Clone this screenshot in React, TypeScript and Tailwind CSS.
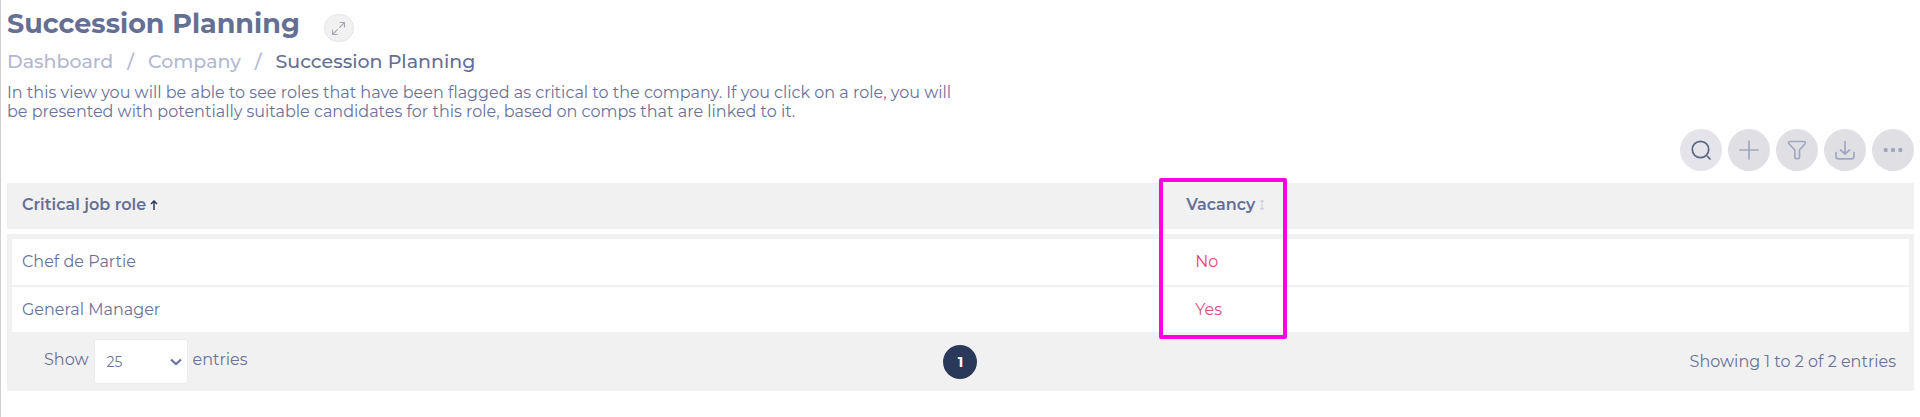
import type { ReactNode } from 'react';

const roles = [
  { name: 'Chef de Partie', vacancy: 'No', color: 'text-[#e9447a]' },
  { name: 'General Manager', vacancy: 'Yes', color: 'text-[#cc5685]' },
];

function Icon({ children, className = 'size-5' }: { children: ReactNode; className?: string }) {
  return (
    <svg
      viewBox="0 0 20 20"
      className={className}
      fill="none"
      stroke="currentColor"
      strokeWidth="1.7"
      strokeLinecap="round"
      strokeLinejoin="round"
      aria-hidden="true"
    >
      {children}
    </svg>
  );
}

function ToolButton({ label, active, children }: { label: string; active?: boolean; children: ReactNode }) {
  return (
    <button
      type="button"
      aria-label={label}
      className={`flex size-[42px] items-center justify-center rounded-full ${
        active ? 'bg-[#e4e4ea] text-[#5c6480]' : 'bg-[#e0e0e4] text-[#a0a7c0]'
      }`}
    >
      {children}
    </button>
  );
}

export default function App() {
  return (
    <main className="min-h-screen border-l border-[#cfcfcf] bg-white px-[6px] pt-[6px] pb-6 font-['Montserrat','Inter',sans-serif] text-[#69729a]">
      <header>
        <div className="flex items-center gap-6">
          <h1 className="text-[27px] leading-8 font-bold text-[#656f94]">Succession Planning</h1>
          <button
            type="button"
            aria-label="Expand"
            className="mt-2 flex h-7 w-[30px] items-center justify-center rounded-full border border-[#e6e6ea] bg-[#f1f1f1] text-[#a3a8b4]"
          >
            <Icon className="size-[15px]">
              <path d="M2 18L8.5 11.5M11.5 8.5L18 2M12 2H18V8M2 12V18H8" strokeWidth="1.5" />
            </Icon>
          </button>
        </div>
        <nav aria-label="Breadcrumb" className="mt-2 flex gap-[14px] text-[19px] leading-6 font-medium text-[#b3b8d0]">
          <a href="#dashboard">Dashboard</a>
          <span>/</span>
          <a href="#company">Company</a>
          <span>/</span>
          <span className="text-[#656f94]">Succession Planning</span>
        </nav>
        <p className="mt-[9px] max-w-[960px] text-base leading-[19px]">
          In this view you will be able to see roles that have been flagged as critical to the company. If you click on a role, you will be presented with potentially suitable candidates for this role, based on comps that are linked to it.
        </p>
      </header>

      <div className="mt-2 flex justify-end gap-[6px]">
        <ToolButton label="Search" active>
          <Icon>
            <circle cx="9.5" cy="9.5" r="8.2" />
            <path d="M16.5 16.5L19 19" />
          </Icon>
        </ToolButton>
        <ToolButton label="Add">
          <Icon>
            <path d="M10 1V19M1 10H19" />
          </Icon>
        </ToolButton>
        <ToolButton label="Filter">
          <Icon>
            <path d="M2.8 1.5H17.2C18.2 1.5 18.8 2.6 18.2 3.5L12.5 10V17.2C12.5 19.2 7.8 19.2 7.8 17.2V10L1.8 3.5C1.2 2.6 1.8 1.5 2.8 1.5Z" />
          </Icon>
        </ToolButton>
        <ToolButton label="Download">
          <Icon>
            <path d="M10 1.5V14M5.5 10L10 14L14.5 10M1 12.5V16.5Q1 18.8 3.3 18.8H16.7Q19 18.8 19 16.5V12.5" />
          </Icon>
        </ToolButton>
        <ToolButton label="More">
          <Icon>
            <g fill="currentColor" stroke="none">
              <circle cx="2.7" cy="10" r="2.2" />
              <circle cx="10" cy="10" r="2.2" />
              <circle cx="17.3" cy="10" r="2.2" />
            </g>
          </Icon>
        </ToolButton>
      </div>

      <section className="mt-3 bg-[#f1f1f1]">
        <table className="w-full table-fixed border-separate border-spacing-0 text-left text-base">
          <thead className="font-semibold text-[#656f94]">
            <tr className="h-[51px]">
              <th className="w-[61%] border-b-[5px] border-white pb-0.5 pl-[15px] font-semibold">
                <button type="button" className="flex items-center gap-1">
                  Critical job role
                  <svg viewBox="0 0 8 10" className="h-[10px] w-2" fill="none" stroke="#303a5c" strokeWidth="1.5" aria-hidden="true">
                    <path d="M4 10V1M1 4L4 1L7 4" />
                  </svg>
                </button>
              </th>
              <th className="relative border-b-[5px] border-white pb-0.5 pl-4 font-semibold">
                <button type="button" className="flex items-center gap-1">
                  Vacancy
                  <svg viewBox="0 0 6 12" className="h-3 w-[6px]" fill="none" stroke="#c6cad8" strokeWidth="1" aria-hidden="true">
                    <path d="M3 1V11M1 3L3 1L5 3M1 9L3 11L5 9" />
                  </svg>
                </button>
                <span className="pointer-events-none absolute -top-[5px] -left-[11px] h-[161px] w-32 rounded-[2px] border-4 border-[#ff00e6]" />
              </th>
            </tr>
          </thead>
          <tbody>
            {roles.map((role, i) => (
              <tr key={role.name} className={i === 0 ? 'h-[53px]' : 'h-[45px]'}>
                <td className={`border-l-[5px] border-[#f1f1f1] bg-white pl-[10px] ${i === 0 ? 'border-t-[5px] border-b-2' : ''}`}>
                  {role.name}
                </td>
                <td className={`border-r-[5px] border-[#f1f1f1] bg-white pl-[25px] ${i === 0 ? 'border-t-[5px] border-b-2' : ''}`}>
                  <a href={`#${role.vacancy}`} className={role.color}>{role.vacancy}</a>
                </td>
              </tr>
            ))}
          </tbody>
        </table>

        <footer className="grid grid-cols-3 items-center px-[18px] py-[7px]">
          <div className="flex items-center gap-[5px] pl-[19px]">
            <label htmlFor="entries" className="pb-1">Show</label>
            <div className="relative">
              <select
                id="entries"
                defaultValue="25"
                className="h-[45px] w-[94px] appearance-none rounded-[3px] border border-[#ececec] bg-white pl-3 text-sm"
              >
                <option>10</option>
                <option>25</option>
                <option>50</option>
              </select>
              <svg
                viewBox="0 0 12 8"
                className="pointer-events-none absolute top-[19px] right-[6px] h-2 w-3"
                fill="none"
                stroke="#69729a"
                strokeWidth="2.2"
                aria-hidden="true"
              >
                <path d="M1 1.5L6 6L11 1.5" />
              </svg>
            </div>
            <span className="pb-1">entries</span>
          </div>
          <button type="button" className="size-[34px] justify-self-center rounded-full bg-[#2a3859] text-sm font-bold text-white">
            1
          </button>
          <p className="justify-self-end">Showing 1 to 2 of 2 entries</p>
        </footer>
      </section>
    </main>
  );
}
